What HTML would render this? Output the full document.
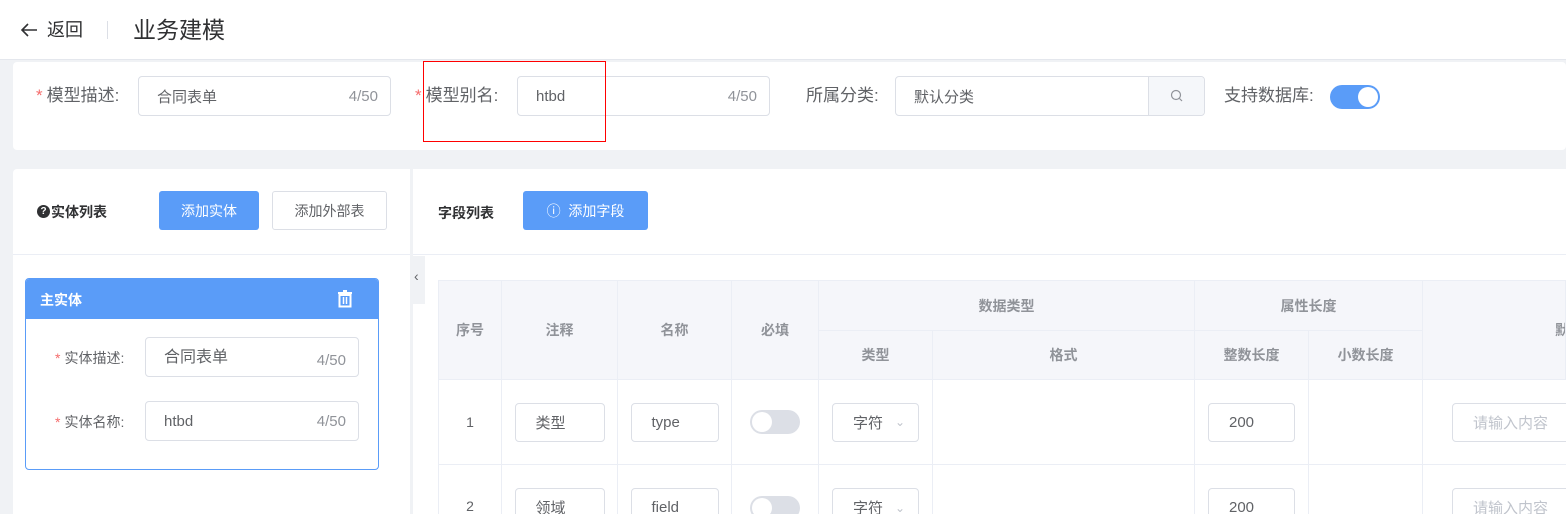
<!DOCTYPE html>
<html style="overflow:hidden;width:1566px;height:514px"><head><meta charset="utf-8"><style>
*{box-sizing:border-box;margin:0;padding:0}
body{width:1566px;height:514px;overflow:hidden;background:#f0f2f5;font-family:"Liberation Sans","Noto Sans CJK SC",sans-serif;color:#606266;position:relative}
.a{position:absolute}
.inp{position:absolute;border:1px solid #dcdfe6;border-radius:4px;background:#fff;font-size:15px;color:#606266;display:flex;align-items:center;padding-left:18px}
.cnt{position:absolute;right:12px;color:#909399;font-size:15px}
.lbl{position:absolute;font-size:17px;color:#606266;line-height:20px}
.star{color:#f56c6c;margin-right:4px}
.btn{position:absolute;border-radius:3px;font-size:14px;display:flex;align-items:center;justify-content:center}
.th{position:absolute;background:#f5f6fa;border-right:1px solid #ebeef5;border-bottom:1px solid #ebeef5;font-size:14px;font-weight:bold;color:#909399;display:flex;align-items:center;justify-content:center}
.td{position:absolute;border-right:1px solid #ebeef5;border-bottom:1px solid #ebeef5;background:#fff;font-size:14px;color:#606266;display:flex;align-items:center;justify-content:center}
.td2{position:absolute;border-right:1px solid #ebeef5;background:#fff;font-size:14px;color:#606266;display:flex;align-items:flex-start;justify-content:center;padding-top:23px;overflow:hidden}
.ci{border:1px solid #dcdfe6;border-radius:4px;height:39px;display:flex;align-items:center;padding-left:20px;font-size:15px;color:#606266;background:#fff;flex-shrink:0}
.sw{width:50px;height:24px;border-radius:12px;background:#dcdfe6;position:relative;flex-shrink:0}
.sw:after{content:"";position:absolute;left:2px;top:2px;width:20px;height:20px;border-radius:50%;background:#fff}
.r{position:absolute;background:#ff0000}
#clip{position:absolute;left:0;top:0;width:1566px;height:514px;overflow:hidden}
</style></head><body><div id="clip">
<div class="a" style="left:0;top:0;width:1566px;height:60px;background:#fff;border-bottom:1px solid #e4e7ed"></div>
<svg class="a" style="left:20px;top:22px" width="18" height="16" viewBox="0 0 18 16"><path d="M17 8H2M8 2L2 8l6 6" fill="none" stroke="#303133" stroke-width="1.6"/></svg>
<div class="a" style="left:47px;top:19px;font-size:18px;color:#303133;line-height:22px">返回</div>
<div class="a" style="left:107px;top:21px;width:1px;height:18px;background:#dcdfe6"></div>
<div class="a" style="left:133px;top:15px;font-size:23px;color:#303133;line-height:30px">业务建模</div>

<div class="a" style="left:13px;top:62px;width:1553px;height:88px;background:#fff;border-radius:4px"></div>
<div class="lbl" style="left:36px;top:86px"><span class="star">*</span>模型描述:</div>
<div class="inp" style="left:138px;top:76px;width:253px;height:40px">合同表单<span class="cnt">4/50</span></div>
<div class="lbl" style="left:415px;top:86px"><span class="star">*</span>模型别名:</div>
<div class="inp" style="left:517px;top:76px;width:253px;height:40px">htbd<span class="cnt">4/50</span></div>
<div class="r" style="left:423px;top:61px;width:183px;height:1px"></div>
<div class="r" style="left:423px;top:141px;width:183px;height:1px"></div>
<div class="r" style="left:423px;top:61px;width:1px;height:81px"></div>
<div class="r" style="left:605px;top:61px;width:1px;height:81px"></div>
<div class="lbl" style="left:806px;top:86px">所属分类:</div>
<div class="inp" style="left:895px;top:76px;width:310px;height:40px">默认分类</div>
<div class="a" style="left:1148px;top:77px;width:56px;height:38px;background:#f5f7fa;border-left:1px solid #dcdfe6;border-radius:0 4px 4px 0;display:flex;align-items:center;justify-content:center"><svg width="14" height="14" viewBox="0 0 14 14"><circle cx="6" cy="6" r="4.5" fill="none" stroke="#909399" stroke-width="1.2"/><path d="M9.5 9.5L12 12" stroke="#909399" stroke-width="1.2"/></svg></div>
<div class="lbl" style="left:1224px;top:86px">支持数据库:</div>
<div class="a" style="left:1330px;top:85px;width:50px;height:24px;border-radius:12px;background:#5a9cf8"><div class="a" style="left:28px;top:2px;width:20px;height:20px;border-radius:50%;background:#fff"></div></div>

<div class="a" style="left:13px;top:169px;width:397px;height:345px;background:#fff;border-radius:4px 0 0 0"></div>
<div class="a" style="left:13px;top:254px;width:397px;height:1px;background:#ebeef5"></div>
<div class="a" style="left:37px;top:205px;width:13px;height:13px;border-radius:50%;background:#303133;color:#fff;font-size:10px;font-weight:bold;text-align:center;line-height:13px">?</div>
<div class="a" style="left:51px;top:202px;font-size:14px;font-weight:bold;color:#303133">实体列表</div>
<div class="btn" style="left:159px;top:191px;width:100px;height:39px;background:#5a9cf8;color:#fff">添加实体</div>
<div class="btn" style="left:272px;top:191px;width:115px;height:39px;border:1px solid #dcdfe6;color:#606266;background:#fff">添加外部表</div>

<div class="a" style="left:25px;top:278px;width:354px;height:192px;border:1px solid #5a9cf8;border-radius:4px;background:#fff;overflow:hidden">
 <div style="height:40px;background:#5a9cf8;color:#fff;font-weight:bold;font-size:14px;padding:11px 0 0 14px">主实体</div>
 <svg class="a" style="left:311px;top:11px" width="16" height="18" viewBox="0 0 16 18"><rect x="1" y="2" width="14" height="2" fill="#fff"/><rect x="6" y="0" width="4" height="2" fill="#fff"/><path d="M2.5 5h11v11.5h-11z" fill="none" stroke="#fff" stroke-width="2"/><path d="M6.5 7v7M9.5 7v7" stroke="#fff" stroke-width="1.5"/></svg>
</div>
<div class="a" style="left:55px;top:348px;font-size:14px"><span class="star">*</span>实体描述:</div>
<div class="inp" style="left:145px;top:337px;width:214px;height:40px;font-size:16px;padding-bottom:4px">合同表单<span class="cnt" style="top:14px">4/50</span></div>
<div class="a" style="left:55px;top:412px;font-size:14px"><span class="star">*</span>实体名称:</div>
<div class="inp" style="left:145px;top:401px;width:214px;height:40px">htbd<span class="cnt">4/50</span></div>

<div class="a" style="left:413px;top:169px;width:1153px;height:345px;background:#fff"></div>
<div class="a" style="left:413px;top:254px;width:1153px;height:1px;background:#ebeef5"></div>
<div class="a" style="left:411px;top:256px;width:14px;height:48px;background:#f0f2f5;font-size:14px;color:#606266;padding:12px 0 0 3px">&lsaquo;</div>
<div class="a" style="left:438px;top:203px;font-size:14px;font-weight:bold;color:#303133">字段列表</div>
<div class="btn" style="left:523px;top:191px;width:125px;height:39px;background:#5a9cf8;color:#fff">&#9432;&nbsp;&nbsp;添加字段</div>

<div class="a" style="left:438px;top:280px;width:1128px;height:1px;background:#ebeef5"></div>
<div class="a" style="left:438px;top:280px;width:1px;height:234px;background:#ebeef5"></div>
<div class="th" style="left:439px;top:281px;width:63px;height:99px">序号</div>
<div class="th" style="left:502px;top:281px;width:116px;height:99px">注释</div>
<div class="th" style="left:618px;top:281px;width:114px;height:99px">名称</div>
<div class="th" style="left:732px;top:281px;width:87px;height:99px">必填</div>
<div class="th" style="left:819px;top:281px;width:376px;height:50px">数据类型</div>
<div class="th" style="left:819px;top:331px;width:114px;height:49px">类型</div>
<div class="th" style="left:933px;top:331px;width:262px;height:49px">格式</div>
<div class="th" style="left:1195px;top:281px;width:228px;height:50px">属性长度</div>
<div class="th" style="left:1195px;top:331px;width:114px;height:49px">整数长度</div>
<div class="th" style="left:1309px;top:331px;width:114px;height:49px">小数长度</div>
<div class="th" style="left:1423px;top:281px;width:143px;height:99px;justify-content:flex-start;padding-left:132px;overflow:hidden">默</div>

<div class="td" style="left:439px;top:380px;width:63px;height:85px">1</div>
<div class="td" style="left:502px;top:380px;width:116px;height:85px"><div class="ci" style="width:90px">类型</div></div>
<div class="td" style="left:618px;top:380px;width:114px;height:85px"><div class="ci" style="width:88px">type</div></div>
<div class="td" style="left:732px;top:380px;width:87px;height:85px"><div class="sw"></div></div>
<div class="td" style="left:819px;top:380px;width:114px;height:85px"><div class="ci" style="width:87px">字符 <span style="color:#c0c4cc;margin-left:12px;font-size:12px">&#8964;</span></div></div>
<div class="td" style="left:933px;top:380px;width:262px;height:85px"></div>
<div class="td" style="left:1195px;top:380px;width:114px;height:85px"><div class="ci" style="width:87px">200</div></div>
<div class="td" style="left:1309px;top:380px;width:114px;height:85px"></div>
<div class="td" style="left:1423px;top:380px;width:143px;height:85px;justify-content:flex-start;padding-left:29px;overflow:hidden;border-right:none"><div class="ci" style="width:150px;color:#c0c4cc">请输入内容</div></div>

<div class="td2" style="left:439px;top:465px;width:63px;height:49px;padding-top:33px">2</div>
<div class="td2" style="left:502px;top:465px;width:116px;height:49px"><div class="ci" style="width:90px">领域</div></div>
<div class="td2" style="left:618px;top:465px;width:114px;height:49px"><div class="ci" style="width:88px">field</div></div>
<div class="td2" style="left:732px;top:465px;width:87px;height:49px;padding-top:31px"><div class="sw"></div></div>
<div class="td2" style="left:819px;top:465px;width:114px;height:49px"><div class="ci" style="width:87px">字符 <span style="color:#c0c4cc;margin-left:12px;font-size:12px">&#8964;</span></div></div>
<div class="td2" style="left:933px;top:465px;width:262px;height:49px"></div>
<div class="td2" style="left:1195px;top:465px;width:114px;height:49px"><div class="ci" style="width:87px">200</div></div>
<div class="td2" style="left:1309px;top:465px;width:114px;height:49px"></div>
<div class="td2" style="left:1423px;top:465px;width:143px;height:49px;justify-content:flex-start;padding-left:29px;border-right:none"><div class="ci" style="width:150px;color:#c0c4cc">请输入内容</div></div>
</div></body></html>
